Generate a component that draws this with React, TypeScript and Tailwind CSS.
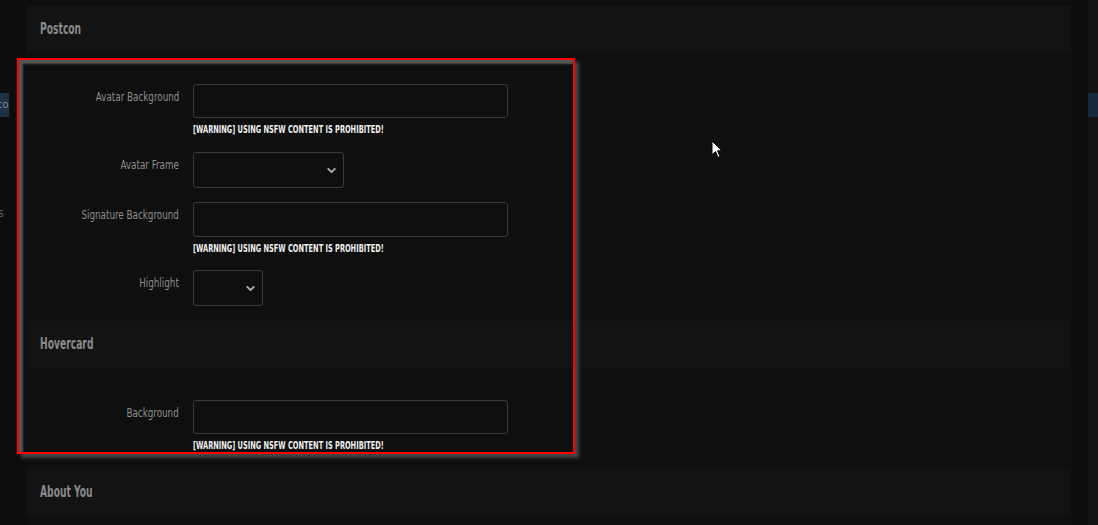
import { ChevronDown } from 'lucide-react';

const font = { fontFamily: '"DejaVu Sans Condensed", "Liberation Sans", sans-serif' };

function Warning() {
  return (
    <div className="mt-[5px] h-[14px] leading-[14px] text-[11px] font-bold text-[#f0f0f0] whitespace-nowrap">
      <span className="inline-block origin-left scale-x-[0.67]">[WARNING] USING NSFW CONTENT IS PROHIBITED!</span>
    </div>
  );
}

function Row({ label, children }: { label: string; children: React.ReactNode }) {
  return (
    <div className="flex">
      <div className="w-[152px] shrink-0 pt-[5px] text-right text-[13px] leading-[16px] text-[#8e8e8e] whitespace-nowrap">
        <span className="inline-block origin-right scale-x-[0.75]">{label}</span>
      </div>
      <div className="ml-[14px]">{children}</div>
    </div>
  );
}

function TextInput() {
  return <div className="w-[315px] h-[34px] rounded-[3px] border border-[#3a3a3a] bg-[#0f0f0f]" />;
}

function Select({ width }: { width: string }) {
  return (
    <div className={`${width} h-[36px] rounded-[3px] border border-[#3a3a3a] bg-[#0f0f0f] flex items-center justify-end pr-[5px]`}>
      <ChevronDown className="w-[13px] h-[13px] text-[#b0b0b0]" strokeWidth={3.5} />
    </div>
  );
}

function SectionBar({ title, h }: { title: string; h: string }) {
  return (
    <div className={`${h} bg-[#131313] flex items-center px-[13px] text-[15px] font-bold text-[#8a8a8a] whitespace-nowrap`}>
      <span className="inline-block origin-left scale-x-[0.68]">{title}</span>
    </div>
  );
}

export default function App() {
  return (
    <div className="relative w-[1098px] h-[525px] overflow-hidden bg-[#0d0d0d] flex" style={font}>
      {/* left rail */}
      <div className="w-[27px] shrink-0 relative">
        <div className="mt-[93px] h-[24px] w-[9px] bg-[#1b3246] text-[11px] leading-[24px] text-[#7a8a99] overflow-hidden whitespace-nowrap">
          <span className="-ml-[3px]">co</span>
        </div>
        <div className="mt-[88px] w-[6px] overflow-hidden text-[12px] text-[#5e5e5e] leading-[16px]">
          <span className="-ml-[2px]">s</span>
        </div>
      </div>

      {/* main column */}
      <div className="w-[1044px] shrink-0 pt-[6px]">
        <SectionBar title="Postcon" h="h-[46px]" />
        <div className="bg-[#0f0f0f] pt-[32px] pb-[15px] flex flex-col">
          <Row label="Avatar Background">
            <TextInput />
            <Warning />
          </Row>
          <div className="mt-[15px]">
            <Row label="Avatar Frame">
              <Select width="w-[151px]" />
            </Row>
          </div>
          <div className="mt-[14px]">
            <Row label="Signature Background">
              <div className="w-[315px] h-[35px] rounded-[3px] border border-[#3a3a3a] bg-[#0f0f0f]" />
              <Warning />
            </Row>
          </div>
          <div className="mt-[14px]">
            <Row label="Highlight">
              <Select width="w-[70px]" />
            </Row>
          </div>
        </div>
        <SectionBar title="Hovercard" h="h-[47px]" />
        <div className="bg-[#0f0f0f] pt-[32px] pb-[16px]">
          <Row label="Background">
            <TextInput />
            <Warning />
          </Row>
        </div>
        <SectionBar title="About You" h="h-[46px]" />
        <div className="bg-[#0f0f0f] h-[10px]" />
      </div>

      {/* right rails */}
      <div className="w-[17px] shrink-0 bg-[#0e0e0e]" />
      <div className="w-[10px] shrink-0 bg-[#121212]">
        <div className="mt-[93px] h-[24px] bg-[#14293b]" />
      </div>

      {/* highlight box */}
      <div className="absolute left-[17px] top-[58px] w-[558px] h-[396px] border-2 border-[#ff0000] shadow-[inset_4px_4px_2px_#555,4px_4px_3px_#444]" />

      {/* cursor */}
      <svg className="absolute left-[711px] top-[140px]" width="12" height="19" viewBox="0 0 12 19">
        <path d="M1 1 L1 15 L4.5 11.5 L7 17.5 L9 16.6 L6.6 10.8 L11 10.8 Z" fill="#fff" stroke="#000" strokeWidth="1" />
      </svg>
    </div>
  );
}
